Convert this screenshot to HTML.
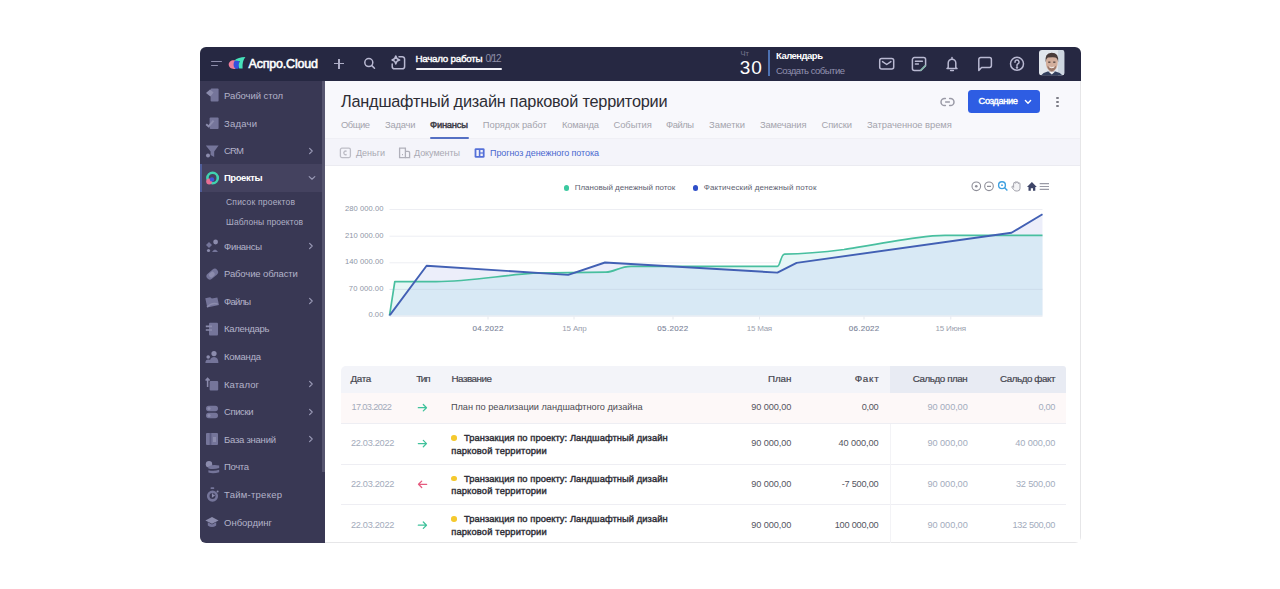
<!DOCTYPE html><html><head><meta charset="utf-8"><style>
*{margin:0;padding:0;box-sizing:border-box}
html,body{width:1280px;height:589px;background:#fff;overflow:hidden;font-family:"Liberation Sans",sans-serif}
.a{position:absolute;white-space:nowrap}
#frame{position:absolute;left:200px;top:47px;width:881px;height:496px;border-radius:6px;overflow:hidden;background:#fff}
#pg{position:absolute;left:-200px;top:-47px;width:1280px;height:589px}
.r{position:absolute}
svg.a{overflow:visible}
</style></head><body>
<div id="frame"><div id="pg">
<div class="r" style="left:200px;top:80px;width:125px;height:463px;background:#393854"></div>
<div class="r" style="left:322px;top:80px;width:3px;height:392px;background:#56556f"></div>
<div class="r" style="left:325px;top:80px;width:755px;height:59px;background:#f8f8fc"></div>
<div class="r" style="left:325px;top:138px;width:755px;height:28px;background:#f4f4fa;border-top:1px solid #efeff5;border-bottom:1px solid #ebebf1"></div>
<div class="r" style="left:1080px;top:80px;width:1px;height:463px;background:#e6e6e8"></div>
<div class="r" style="left:325px;top:542px;width:756px;height:1px;background:#e6e6e8"></div>
<div class="r" style="left:200px;top:47px;width:881px;height:33.5px;background:#262842"></div>
<div class="r" style="left:211px;top:61px;width:10.5px;height:1.4px;background:#8d8daa;border-radius:1px"></div>
<div class="r" style="left:211px;top:64.6px;width:6.5px;height:1.4px;background:#8d8daa;border-radius:1px"></div>
<svg class="a" style="left:226px;top:55px" width="22" height="16" viewBox="0 0 22 16">
<path d="M9.6 5.6 C6 4.4 2.6 6.6 2.7 9.6 C2.8 12.6 5.8 14.6 9.6 13.8 Z" fill="#ee7d9b"/>
<path d="M9.4 5.2 C7.2 6.6 6.8 11.4 9.2 13.6 C10.8 14 12.4 13.6 12.8 13.2 L13.2 6 C12 5.2 10.6 5 9.4 5.2 Z" fill="#3551dd"/>
<path d="M8.4 5.4 C10.6 3.2 14.6 2.2 19.4 2 C17.2 4.6 16.2 8.4 16.6 13.4 L13.2 13.4 C12.6 11.2 12.4 8.4 13.8 6.2 C12 5.6 10.2 5.4 8.4 5.4 Z" fill="#46e3bb"/>
</svg>
<div class="a" style="left:248.50px;top:58.37px;font-size:12.5px;line-height:12.5px;color:#ffffff;letter-spacing:-0.189px;-webkit-text-stroke:0.55px #ffffff;">Аспро.Cloud</div>
<div class="r" style="left:334.2px;top:63.1px;width:9.6px;height:1.3px;background:#adadc6"></div>
<div class="r" style="left:338.35px;top:59px;width:1.3px;height:9.6px;background:#adadc6"></div>
<svg class="a" style="left:362px;top:56px" width="16" height="16" viewBox="0 0 16 16" fill="none" stroke="#b9b9d2" stroke-width="1.5" stroke-linecap="round">
<circle cx="6.8" cy="6.6" r="4"/><path d="M9.8 9.6 L12.5 12.3"/></svg>
<svg class="a" style="left:389px;top:53px" width="18" height="18" viewBox="0 0 18 18" fill="none" stroke="#b9b9d2" stroke-width="1.5" stroke-linecap="round">
<path d="M10 3.7 H13.2 A2.4 2.4 0 0 1 15.6 6.1 V13.4 A2.4 2.4 0 0 1 13.2 15.8 H5.6 A2.4 2.4 0 0 1 3.2 13.4 V11"/>
<path d="M6.8 3 Q7.4 6.4 10.6 7 Q7.4 7.6 6.8 10.9 Q6.2 7.6 3 7 Q6.2 6.4 6.8 3 Z" fill="none" stroke-width="1.5" stroke-linejoin="round"/>
</svg>
<div class="a" style="left:415.50px;top:53.72px;font-size:9.8px;line-height:9.8px;color:#ffffff;letter-spacing:-0.263px;-webkit-text-stroke:0.4px #ffffff;">Начало работы</div>
<div class="a" style="left:485.50px;top:53.70px;font-size:10px;line-height:10px;color:#8e8ea8;letter-spacing:-1.154px;">0/12</div>
<div class="r" style="left:415.5px;top:68px;width:86.5px;height:2.4px;background:#f2f2f8;border-radius:2px"></div>
<div class="a" style="left:740.40px;top:50.42px;font-size:7.5px;line-height:7.5px;color:#75758f;letter-spacing:0.166px;">Чт</div>
<div class="a" style="left:739.80px;top:58.02px;font-size:19px;line-height:19px;color:#ffffff;letter-spacing:0.865px;">30</div>
<div class="r" style="left:768px;top:50px;width:2.2px;height:26px;background:#4d72b3"></div>
<div class="a" style="left:776.00px;top:51.26px;font-size:9.5px;line-height:9.5px;color:#ffffff;font-weight:bold;letter-spacing:-0.511px;">Календарь</div>
<div class="a" style="left:776.00px;top:65.76px;font-size:9.5px;line-height:9.5px;color:#9292b0;letter-spacing:-0.507px;">Создать событие</div>
<svg class="a" style="left:877px;top:55px" width="20" height="18" viewBox="0 0 20 18" fill="none" stroke="#b9b9d2" stroke-width="1.5" stroke-linejoin="round" stroke-linecap="round">
<rect x="2.7" y="3.5" width="14" height="10.5" rx="2"/><path d="M5.5 6.6 L9.7 9.5 L13.9 6.6"/></svg>
<svg class="a" style="left:910px;top:55px" width="18" height="18" viewBox="0 0 18 18" fill="none" stroke="#b9b9d2" stroke-width="1.5" stroke-linejoin="round" stroke-linecap="round">
<path d="M15.6 10.6 V4.6 A2 2 0 0 0 13.6 2.6 H4.4 A2 2 0 0 0 2.4 4.6 V13.6 A2 2 0 0 0 4.4 15.6 H10.6 Z"/><path d="M5.4 6.3 H12.4 M5.4 9 H8.4"/><path d="M10.8 15.2 L15.2 10.8" stroke="#7fb8a8"/></svg>
<svg class="a" style="left:943px;top:55px" width="18" height="18" viewBox="0 0 18 18" fill="none" stroke="#b9b9d2" stroke-width="1.5" stroke-linejoin="round" stroke-linecap="round">
<path d="M5.2 12.6 V8 A3.8 3.8 0 0 1 12.8 8 V12.6 L14 13.6 H4 Z"/><path d="M9 2.4 V3.6 M7.6 15.4 H10.4"/></svg>
<svg class="a" style="left:976px;top:55px" width="18" height="18" viewBox="0 0 18 18" fill="none" stroke="#b9b9d2" stroke-width="1.5" stroke-linejoin="round" stroke-linecap="round">
<path d="M2.8 15.4 V4.4 A1.8 1.8 0 0 1 4.6 2.6 H13.6 A1.8 1.8 0 0 1 15.4 4.4 V10.6 A1.8 1.8 0 0 1 13.6 12.4 H5.6 Z"/></svg>
<svg class="a" style="left:1008px;top:55px" width="18" height="18" viewBox="0 0 18 18" fill="none" stroke="#b9b9d2" stroke-width="1.5" stroke-linecap="round">
<circle cx="9" cy="8.8" r="6.5"/><path d="M7 7.2 A2 2 0 1 1 9.6 9 Q9 9.4 9 10.4" /><circle cx="9" cy="12.4" r="0.5" fill="#b9b9d2"/></svg>
<svg class="a" style="left:1038.5px;top:50.4px" width="25.5" height="25.4" viewBox="0 0 25.5 25.4">
<defs><clipPath id="av"><rect x="0" y="0" width="25.5" height="25.4" rx="3"/></clipPath></defs>
<g clip-path="url(#av)">
<rect width="25.5" height="25.4" fill="#e2e7ed"/>
<rect x="19" y="0" width="6.5" height="25.4" fill="#cdd6e0"/>
<path d="M2 25.4 Q4 22.6 8.6 21.6 L16.6 21.6 Q21.4 22.6 23.6 25.4 Z" fill="#34405e"/>
<path d="M9.4 21.4 L12.8 24.6 L16.2 21.4 Z" fill="#f4f4f4"/>
<path d="M6.8 11 Q6.6 20.6 12.8 21.8 Q19 20.6 18.8 11 Q18.6 6 12.8 6 Q7 6 6.8 11 Z" fill="#d2ae9c"/>
<path d="M6.6 12.4 Q5.4 3.2 12.6 2.8 Q20.2 2.8 19.2 12.2 Q18.4 7.8 16.4 7.4 Q12.4 7.2 8.8 7.6 Q7 8.6 6.6 12.4 Z" fill="#4a3c3a"/>
<path d="M8.4 15.4 Q12.8 21 17.2 15.4 Q17.2 20 12.8 21.4 Q8.4 20 8.4 15.4 Z" fill="#9a786a"/>
<path d="M10.4 17 Q12.8 18.4 15.2 17" stroke="#f6f0ee" stroke-width="1" fill="none"/>
<rect x="9.2" y="11.6" width="2.2" height="1.1" fill="#3b2f2f"/><rect x="14.2" y="11.6" width="2.2" height="1.1" fill="#3b2f2f"/>
</g></svg>
<div class="r" style="left:200px;top:163.5px;width:122px;height:28.3px;background:#44425f"></div>
<div class="r" style="left:200px;top:163.5px;width:1.8px;height:28.3px;background:#4e5c98"></div>
<div class="a" style="left:224.00px;top:90.76px;font-size:9.5px;line-height:9.5px;color:#b3b3c9;letter-spacing:-0.058px;">Рабочий стол</div>
<div class="a" style="left:224.00px;top:118.76px;font-size:9.5px;line-height:9.5px;color:#b3b3c9;letter-spacing:0.221px;">Задачи</div>
<div class="a" style="left:224.00px;top:146.06px;font-size:9.5px;line-height:9.5px;color:#b3b3c9;letter-spacing:-0.818px;">CRM</div>
<div class="a" style="left:224.00px;top:173.06px;font-size:9.5px;line-height:9.5px;color:#ffffff;font-weight:bold;letter-spacing:-0.456px;">Проекты</div>
<div class="a" style="left:224.00px;top:241.76px;font-size:9.5px;line-height:9.5px;color:#b3b3c9;letter-spacing:-0.314px;">Финансы</div>
<div class="a" style="left:224.00px;top:269.26px;font-size:9.5px;line-height:9.5px;color:#b3b3c9;letter-spacing:-0.124px;">Рабочие области</div>
<div class="a" style="left:224.00px;top:296.76px;font-size:9.5px;line-height:9.5px;color:#b3b3c9;letter-spacing:-0.796px;">Файлы</div>
<div class="a" style="left:224.00px;top:324.36px;font-size:9.5px;line-height:9.5px;color:#b3b3c9;letter-spacing:-0.306px;">Календарь</div>
<div class="a" style="left:224.00px;top:351.96px;font-size:9.5px;line-height:9.5px;color:#b3b3c9;letter-spacing:-0.284px;">Команда</div>
<div class="a" style="left:224.00px;top:379.56px;font-size:9.5px;line-height:9.5px;color:#b3b3c9;letter-spacing:0.077px;">Каталог</div>
<div class="a" style="left:224.00px;top:407.16px;font-size:9.5px;line-height:9.5px;color:#b3b3c9;letter-spacing:-0.405px;">Списки</div>
<div class="a" style="left:224.00px;top:434.76px;font-size:9.5px;line-height:9.5px;color:#b3b3c9;letter-spacing:-0.244px;">База знаний</div>
<div class="a" style="left:224.00px;top:462.36px;font-size:9.5px;line-height:9.5px;color:#b3b3c9;letter-spacing:-0.345px;">Почта</div>
<div class="a" style="left:224.00px;top:489.96px;font-size:9.5px;line-height:9.5px;color:#b3b3c9;letter-spacing:0.259px;">Тайм-трекер</div>
<div class="a" style="left:224.00px;top:517.56px;font-size:9.5px;line-height:9.5px;color:#b3b3c9;letter-spacing:0.002px;">Онбординг</div>
<div class="a" style="left:226.00px;top:198.29px;font-size:8.5px;line-height:8.5px;color:#b0b0c6;letter-spacing:0.194px;">Список проектов</div>
<div class="a" style="left:226.00px;top:217.89px;font-size:8.5px;line-height:8.5px;color:#b0b0c6;letter-spacing:0.094px;">Шаблоны проектов</div>
<svg class="a" style="left:307px;top:146.5px" width="8" height="8" viewBox="0 0 8 8" fill="none" stroke="#9898b4" stroke-width="1.2" stroke-linecap="round" stroke-linejoin="round"><path d="M2.6 1.4 L5.2 4 L2.6 6.6"/></svg>
<svg class="a" style="left:307px;top:242.2px" width="8" height="8" viewBox="0 0 8 8" fill="none" stroke="#9898b4" stroke-width="1.2" stroke-linecap="round" stroke-linejoin="round"><path d="M2.6 1.4 L5.2 4 L2.6 6.6"/></svg>
<svg class="a" style="left:307px;top:297.2px" width="8" height="8" viewBox="0 0 8 8" fill="none" stroke="#9898b4" stroke-width="1.2" stroke-linecap="round" stroke-linejoin="round"><path d="M2.6 1.4 L5.2 4 L2.6 6.6"/></svg>
<svg class="a" style="left:307px;top:380.0px" width="8" height="8" viewBox="0 0 8 8" fill="none" stroke="#9898b4" stroke-width="1.2" stroke-linecap="round" stroke-linejoin="round"><path d="M2.6 1.4 L5.2 4 L2.6 6.6"/></svg>
<svg class="a" style="left:307px;top:407.6px" width="8" height="8" viewBox="0 0 8 8" fill="none" stroke="#9898b4" stroke-width="1.2" stroke-linecap="round" stroke-linejoin="round"><path d="M2.6 1.4 L5.2 4 L2.6 6.6"/></svg>
<svg class="a" style="left:307px;top:435.2px" width="8" height="8" viewBox="0 0 8 8" fill="none" stroke="#9898b4" stroke-width="1.2" stroke-linecap="round" stroke-linejoin="round"><path d="M2.6 1.4 L5.2 4 L2.6 6.6"/></svg>
<svg class="a" style="left:307.5px;top:173.8px" width="8" height="8" viewBox="0 0 8 8" fill="none" stroke="#9898b4" stroke-width="1.2" stroke-linecap="round" stroke-linejoin="round"><path d="M1.2 2.6 L4 5.2 L6.8 2.6"/></svg>
<svg class="a" style="left:204px;top:87.3px" width="16" height="16" viewBox="0 0 16 16"><rect x="6.6" y="1.6" width="8" height="13" rx="1" fill="#75759a"/><path d="M2 6 L6 2.4 L9.6 5.6 L6.4 9.6 Z" fill="#8c8cad"/></svg>
<svg class="a" style="left:204px;top:115.3px" width="16" height="16" viewBox="0 0 16 16"><rect x="5.6" y="2.4" width="9" height="11.6" rx="1" fill="#75759a"/><path d="M2.2 9.2 L4.6 11.4 L9.6 5.6" stroke="#8c8cad" stroke-width="2" fill="none"/></svg>
<svg class="a" style="left:204px;top:142.6px" width="16" height="16" viewBox="0 0 16 16"><path d="M1.8 2.6 H14.6 L10.2 8.6 V14 L6.6 12 V8.6 Z" fill="#75759a"/><circle cx="4" cy="12.4" r="2" fill="#8c8cad"/></svg>
<svg class="a" style="left:204px;top:169.6px" width="16" height="16" viewBox="0 0 16 16"><circle cx="8.6" cy="8" r="5.2" fill="none" stroke="#3fd3b0" stroke-width="2.6"/><circle cx="5.2" cy="11.6" r="3" fill="#e76f95"/><circle cx="8" cy="9.4" r="2.2" fill="#3e57d9"/></svg>
<svg class="a" style="left:204px;top:238.3px" width="16" height="16" viewBox="0 0 16 16"><circle cx="11.6" cy="4" r="2.4" fill="#8c8cad"/><path d="M2 7 L5 4 L8 7 L5 10 Z" fill="#75759a"/><path d="M8 14 Q11 9 14 14 Z" fill="#75759a"/><circle cx="4.5" cy="12.5" r="1.6" fill="#8c8cad"/></svg>
<svg class="a" style="left:204px;top:265.8px" width="16" height="16" viewBox="0 0 16 16"><rect x="1.6" y="5" width="13" height="6.6" rx="3.3" transform="rotate(-40 8 8)" fill="#75759a"/><rect x="4.5" y="6" width="6" height="4.6" rx="2" transform="rotate(-40 8 8)" fill="#8c8cad"/></svg>
<svg class="a" style="left:204px;top:293.3px" width="16" height="16" viewBox="0 0 16 16"><path d="M2 4 H7 L8.4 5.6 H14 V13.4 H2 Z" fill="#75759a" transform="rotate(-12 8 8)"/><path d="M3 14 Q8 9 13.6 11" stroke="#8c8cad" stroke-width="1.5" fill="none"/></svg>
<svg class="a" style="left:204px;top:320.9px" width="16" height="16" viewBox="0 0 16 16"><rect x="5" y="1.8" width="9" height="12.6" rx="1" fill="#75759a"/><path d="M1.8 5.4 H8 M1.8 9 H8" stroke="#8c8cad" stroke-width="1.6"/></svg>
<svg class="a" style="left:204px;top:348.5px" width="16" height="16" viewBox="0 0 16 16"><circle cx="10" cy="4.6" r="2.6" fill="#8c8cad"/><path d="M5.6 14 Q5.6 8 10 8 Q14.4 8 14.4 14 Z" fill="#75759a"/><circle cx="4.2" cy="8" r="1.8" fill="#8c8cad"/><path d="M1.4 14 Q1.4 10.6 4.4 10.6 Q6 10.6 6.6 12 V14 Z" fill="#75759a"/></svg>
<svg class="a" style="left:204px;top:376.1px" width="16" height="16" viewBox="0 0 16 16"><rect x="5.6" y="5" width="8.6" height="9.4" rx="1" fill="#75759a"/><path d="M3.6 11 V2.6 M1.6 4.6 L3.6 2.4 L5.6 4.6" stroke="#8c8cad" stroke-width="1.5" fill="none"/></svg>
<svg class="a" style="left:204px;top:403.7px" width="16" height="16" viewBox="0 0 16 16"><rect x="2" y="1.8" width="12" height="5.4" rx="2.7" fill="#75759a"/><rect x="2" y="8.8" width="12" height="5.4" rx="2.7" fill="#75759a"/><circle cx="5" cy="4.5" r="1.6" fill="#8c8cad"/><circle cx="5" cy="11.5" r="1.6" fill="#8c8cad"/></svg>
<svg class="a" style="left:204px;top:431.3px" width="16" height="16" viewBox="0 0 16 16"><rect x="2" y="2" width="12" height="12" rx="1" fill="#75759a"/><rect x="5.6" y="2" width="1.8" height="12" fill="#5a5a80"/><rect x="9" y="6" width="3" height="5" fill="#8c8cad"/></svg>
<svg class="a" style="left:204px;top:458.9px" width="16" height="16" viewBox="0 0 16 16"><circle cx="5" cy="5.2" r="3.2" fill="#8c8cad"/><path d="M4.4 7.4 Q9 5.2 15.2 6.6 V9 Q9.6 10.8 4.4 9.4 Z" fill="#75759a"/><path d="M4.4 11.2 Q9.6 12.6 15.2 10.8 V13.2 Q9.6 15 4.4 13.6 Z" fill="#75759a"/></svg>
<svg class="a" style="left:204px;top:486.5px" width="16" height="16" viewBox="0 0 16 16"><circle cx="8.5" cy="9.1" r="4.3" fill="none" stroke="#75759a" stroke-width="2.6"/><path d="M8.6 6.6 V9.4 L10.6 8" stroke="#8c8cad" stroke-width="1.4" fill="none"/><rect x="6.6" y="0.2" width="3.6" height="1.8" rx="0.6" fill="#75759a"/><circle cx="13.6" cy="4.6" r="1" fill="#8c8cad"/></svg>
<svg class="a" style="left:204px;top:514.1px" width="16" height="16" viewBox="0 0 16 16"><path d="M1.4 6.4 L8 3 L14.6 6.4 L8 9.8 Z" fill="#8c8cad"/><path d="M3.8 8.2 V11.6 Q8 14.6 12.2 11.6 V8.2 L8 10.4 Z" fill="#75759a"/></svg>
<div class="a" style="left:341.00px;top:93.17px;font-size:16.3px;line-height:16.3px;color:#2d2d35;letter-spacing:-0.211px;">Ландшафтный дизайн парковой территории</div>
<div class="a" style="left:341.00px;top:119.97px;font-size:9.4px;line-height:9.4px;color:#a4a4ad;letter-spacing:-0.477px;">Общие</div>
<div class="a" style="left:385.00px;top:119.97px;font-size:9.4px;line-height:9.4px;color:#a4a4ad;letter-spacing:-0.192px;">Задачи</div>
<div class="a" style="left:430.00px;top:119.97px;font-size:9.4px;line-height:9.4px;color:#3c3c46;letter-spacing:-0.244px;-webkit-text-stroke:0.45px #3c3c46;">Финансы</div>
<div class="a" style="left:482.80px;top:119.97px;font-size:9.4px;line-height:9.4px;color:#a4a4ad;letter-spacing:-0.050px;">Порядок работ</div>
<div class="a" style="left:562.00px;top:119.97px;font-size:9.4px;line-height:9.4px;color:#a4a4ad;letter-spacing:-0.216px;">Команда</div>
<div class="a" style="left:613.40px;top:119.97px;font-size:9.4px;line-height:9.4px;color:#a4a4ad;letter-spacing:-0.034px;">События</div>
<div class="a" style="left:666.00px;top:119.97px;font-size:9.4px;line-height:9.4px;color:#a4a4ad;letter-spacing:-0.467px;">Файлы</div>
<div class="a" style="left:709.00px;top:119.97px;font-size:9.4px;line-height:9.4px;color:#a4a4ad;letter-spacing:0.008px;">Заметки</div>
<div class="a" style="left:760.00px;top:119.97px;font-size:9.4px;line-height:9.4px;color:#a4a4ad;letter-spacing:-0.168px;">Замечания</div>
<div class="a" style="left:821.50px;top:119.97px;font-size:9.4px;line-height:9.4px;color:#a4a4ad;letter-spacing:-0.139px;">Списки</div>
<div class="a" style="left:867.00px;top:119.97px;font-size:9.4px;line-height:9.4px;color:#a4a4ad;letter-spacing:-0.052px;">Затраченное время</div>
<div class="r" style="left:429.5px;top:137px;width:39px;height:2px;background:#5570c4;border-radius:1px"></div>
<svg class="a" style="left:938px;top:94px" width="19" height="16" viewBox="0 0 19 16" fill="none" stroke="#9a9aa6" stroke-width="1.5" stroke-linecap="round">
<path d="M7.4 4.4 H6.6 A3.6 3.6 0 0 0 6.6 11.6 H7.4"/><path d="M11.6 4.4 H12.4 A3.6 3.6 0 0 1 12.4 11.6 H11.6"/><path d="M7.6 8 H11.4"/></svg>
<div class="r" style="left:968px;top:90px;width:72px;height:22.6px;background:#2e5de3;border-radius:3.5px"></div>
<div class="a" style="left:978.60px;top:97.19px;font-size:9.3px;line-height:9.3px;color:#ffffff;letter-spacing:-0.364px;-webkit-text-stroke:0.4px #ffffff;">Создание</div>
<svg class="a" style="left:1023px;top:97.8px" width="10" height="8" viewBox="0 0 10 8" fill="none" stroke="#ffffff" stroke-width="1.4" stroke-linecap="round" stroke-linejoin="round"><path d="M2.4 2.6 L5 5.2 L7.6 2.6"/></svg>
<div class="r" style="left:1056.3px;top:96.8px;width:2.4px;height:2.4px;border-radius:50%;background:#7c7c86"></div>
<div class="r" style="left:1056.3px;top:100.8px;width:2.4px;height:2.4px;border-radius:50%;background:#7c7c86"></div>
<div class="r" style="left:1056.3px;top:104.8px;width:2.4px;height:2.4px;border-radius:50%;background:#7c7c86"></div>
<svg class="a" style="left:338px;top:146px" width="14" height="14" viewBox="0 0 14 14" fill="none" stroke="#bdbdc6" stroke-width="1.3">
<rect x="2.4" y="2.2" width="10" height="9.4" rx="1.5"/><path d="M8.6 5.4 A1.8 1.8 0 1 0 8.6 8.4"/></svg>
<div class="a" style="left:356.00px;top:149.13px;font-size:9px;line-height:9px;color:#a9a9b3;letter-spacing:-0.014px;">Деньги</div>
<svg class="a" style="left:397px;top:146px" width="15" height="14" viewBox="0 0 15 14" fill="none" stroke="#b0b0ba" stroke-width="1.3">
<path d="M2.6 2.2 H8.4 V11.6 H2.6 Z"/><path d="M8.4 5.4 H11.2 A1.4 1.4 0 0 1 12.6 6.8 V11.6 H8.4"/><path d="M5 8.6 H6"/></svg>
<div class="a" style="left:414.00px;top:149.13px;font-size:9px;line-height:9px;color:#a9a9b3;letter-spacing:-0.049px;">Документы</div>
<svg class="a" style="left:473px;top:146px" width="14" height="14" viewBox="0 0 14 14">
<rect x="1.6" y="2.2" width="10" height="9.6" rx="1.4" fill="#5570d8"/><rect x="3.4" y="4" width="2.4" height="6" fill="#f4f4fa"/><rect x="7.4" y="4" width="2.4" height="2.4" fill="#f4f4fa"/><rect x="7.4" y="7.6" width="2.4" height="2.4" fill="#f4f4fa"/></svg>
<div class="a" style="left:490.00px;top:149.13px;font-size:9px;line-height:9px;color:#4a68cf;letter-spacing:-0.080px;">Прогноз денежного потока</div>
<div class="r" style="left:563.7px;top:185px;width:5.6px;height:5.6px;border-radius:50%;background:#3cc9a0"></div>
<div class="r" style="left:692.7px;top:185px;width:5.6px;height:5.6px;border-radius:50%;background:#2f4fc8"></div>
<div class="a" style="left:574.70px;top:183.76px;font-size:8px;line-height:8px;color:#5d6170;letter-spacing:-0.003px;">Плановый денежный поток</div>
<div class="a" style="left:703.80px;top:183.76px;font-size:8px;line-height:8px;color:#5d6170;letter-spacing:0.113px;">Фактический денежный поток</div>
<div class="a" style="left:345.00px;top:205.21px;font-size:7.6px;line-height:7.6px;color:#8e95a6;letter-spacing:0.040px;">280 000.00</div>
<div class="a" style="left:345.00px;top:231.81px;font-size:7.6px;line-height:7.6px;color:#8e95a6;letter-spacing:0.040px;">210 000.00</div>
<div class="a" style="left:345.00px;top:258.41px;font-size:7.6px;line-height:7.6px;color:#8e95a6;letter-spacing:0.040px;">140 000.00</div>
<div class="a" style="left:348.84px;top:284.81px;font-size:7.6px;line-height:7.6px;color:#8e95a6;letter-spacing:0.094px;">70 000.00</div>
<div class="a" style="left:368.40px;top:311.21px;font-size:7.6px;line-height:7.6px;color:#8e95a6;letter-spacing:0.069px;">0.00</div>
<div class="a" style="left:472.50px;top:324.76px;font-size:8px;line-height:8px;color:#7b8499;letter-spacing:0.347px;-webkit-text-stroke:0.12px #7b8499;">04.2022</div>
<div class="a" style="left:562.30px;top:324.76px;font-size:8px;line-height:8px;color:#9aa0ad;letter-spacing:-0.168px;">15 Апр</div>
<div class="a" style="left:657.30px;top:324.76px;font-size:8px;line-height:8px;color:#7b8499;letter-spacing:0.347px;-webkit-text-stroke:0.12px #7b8499;">05.2022</div>
<div class="a" style="left:746.85px;top:324.76px;font-size:8px;line-height:8px;color:#9aa0ad;letter-spacing:-0.271px;">15 Мая</div>
<div class="a" style="left:848.75px;top:324.76px;font-size:8px;line-height:8px;color:#7b8499;letter-spacing:0.264px;-webkit-text-stroke:0.12px #7b8499;">06.2022</div>
<div class="a" style="left:935.55px;top:324.76px;font-size:8px;line-height:8px;color:#9aa0ad;letter-spacing:-0.187px;">15 Июня</div>
<svg class="a" style="left:0;top:0" width="1280" height="589" viewBox="0 0 1280 589">
<g stroke="#edeef3" stroke-width="1">
<line x1="389.5" y1="209.5" x2="1042.5" y2="209.5"/><line x1="389.5" y1="236.2" x2="1042.5" y2="236.2"/><line x1="389.5" y1="262.8" x2="1042.5" y2="262.8"/>
</g>
<defs><clipPath id="cg"><path d="M389.5,315.6 L394.8,281.6 L436,281.6 C470,281.4 500,275.5 533,273.2 L606,272.2 C614,272 620,266.4 631,266.3 L777.4,266.3 C780.5,266.3 780.5,254.3 784.5,254.2 C800,254 820,252.6 844,249.5 C865,246 890,241.6 918,237.6 C930,236 935,235.5 945,235.4 L1042.5,235.4 L1042.5,315.6 Z"/></clipPath></defs>
<path d="M389.5,315.6 L394.8,281.6 L436,281.6 C470,281.4 500,275.5 533,273.2 L606,272.2 C614,272 620,266.4 631,266.3 L777.4,266.3 C780.5,266.3 780.5,254.3 784.5,254.2 C800,254 820,252.6 844,249.5 C865,246 890,241.6 918,237.6 C930,236 935,235.5 945,235.4 L1042.5,235.4 L1042.5,315.6 Z" fill="#e6f6f6"/>
<path d="M389.5,315.6 L426.6,265.7 L568.2,274.9 L605,262.5 L777.4,272.6 L796.6,262.9 L1011.5,232.7 L1042.5,214.3 L1042.5,315.6 Z" fill="#eceefa"/>
<path d="M389.5,315.6 L426.6,265.7 L568.2,274.9 L605,262.5 L777.4,272.6 L796.6,262.9 L1011.5,232.7 L1042.5,214.3 L1042.5,315.6 Z" fill="#d8e9f5" clip-path="url(#cg)"/>
<g stroke="#c8d6e6" stroke-width="1" opacity="0.6">
<line x1="389.5" y1="289.4" x2="1042.5" y2="289.4"/>
</g>
<path d="M389.5,315.6 L394.8,281.6 L436,281.6 C470,281.4 500,275.5 533,273.2 L606,272.2 C614,272 620,266.4 631,266.3 L777.4,266.3 C780.5,266.3 780.5,254.3 784.5,254.2 C800,254 820,252.6 844,249.5 C865,246 890,241.6 918,237.6 C930,236 935,235.5 945,235.4 L1042.5,235.4" fill="none" stroke="#48bf9f" stroke-width="1.7" stroke-linejoin="round"/>
<path d="M389.5,315.6 L426.6,265.7 L568.2,274.9 L605,262.5 L777.4,272.6 L796.6,262.9 L1011.5,232.7 L1042.5,214.3" fill="none" stroke="#4260b4" stroke-width="1.9" stroke-linejoin="round"/>
<line x1="389.5" y1="316.1" x2="1042.5" y2="316.1" stroke="#dfe5ee" stroke-width="1"/>
<g stroke="#e6e9ef" stroke-width="1"><line x1="488" y1="316.5" x2="488" y2="319.5"/><line x1="574" y1="316.5" x2="574" y2="319.5"/><line x1="673" y1="316.5" x2="673" y2="319.5"/><line x1="759.5" y1="316.5" x2="759.5" y2="319.5"/><line x1="864" y1="316.5" x2="864" y2="319.5"/><line x1="950.8" y1="316.5" x2="950.8" y2="319.5"/></g>
</svg>
<svg class="a" style="left:966px;top:176px" width="90" height="20" viewBox="966 176 90 20">
<g fill="none" stroke="#8e8e98" stroke-width="1.1">
<circle cx="976.3" cy="186.3" r="4.3"/><circle cx="989" cy="186.3" r="4.3"/>
</g>
<circle cx="976.3" cy="186.3" r="1.3" fill="#8e8e98"/>
<line x1="987" y1="186.3" x2="991" y2="186.3" stroke="#8e8e98" stroke-width="1.2"/>
<g fill="none" stroke="#3fa0e0" stroke-width="1.4"><circle cx="1002" cy="185.2" r="3.4"/><line x1="1004.6" y1="187.8" x2="1007.4" y2="190.6"/></g>
<circle cx="1002" cy="185.2" r="0.9" fill="#3fa0e0"/>
<path d="M1013.6 187.4 V183.4 Q1013.6 182.5 1014.4 182.5 Q1015.2 182.5 1015.2 183.4 V182.6 Q1015.2 181.6 1016 181.6 Q1016.8 181.6 1016.8 182.6 V182.8 Q1016.8 182 1017.6 182 Q1018.4 182 1018.4 182.8 V183.6 Q1018.4 182.9 1019.2 182.9 Q1020 182.9 1020 183.8 V188.4 Q1020 191 1017.4 191 H1016 Q1014.6 191 1013.6 189.6 L1011.9 187.2 Q1011.6 186.4 1012.4 186.2 Q1013 186.1 1013.6 187.4 Z" fill="#f4f4f6" stroke="#9a9aa4" stroke-width="0.9"/>
<path d="M1027 186.9 L1031.9 182.1 L1036.8 186.9 H1035.3 V190.8 H1033 V188.2 H1030.8 V190.8 H1028.5 V186.9 Z" fill="#3e4568"/>
<g stroke="#9a9ba6" stroke-width="1.2"><line x1="1039.7" y1="183.6" x2="1049" y2="183.6"/><line x1="1039.7" y1="186.5" x2="1049" y2="186.5"/><line x1="1039.7" y1="189.4" x2="1049" y2="189.4"/></g>
</svg>
<div class="r" style="left:340.5px;top:365.6px;width:549.5px;height:27.2px;background:#f3f4f9;border-radius:5px 0 0 0"></div>
<div class="r" style="left:890px;top:365.6px;width:176px;height:27.2px;background:#e8ebf3;border-radius:0 3px 0 0"></div>
<div class="r" style="left:340.5px;top:392.8px;width:725.5px;height:30.4px;background:#fdf8f8"></div>
<div class="r" style="left:340.5px;top:423.2px;width:725.5px;height:1px;background:#eeeef3"></div>
<div class="r" style="left:340.5px;top:463.7px;width:725.5px;height:1px;background:#eeeef3"></div>
<div class="r" style="left:340.5px;top:504px;width:725.5px;height:1px;background:#eeeef3"></div>
<div class="r" style="left:889.5px;top:423.5px;width:1px;height:119px;background:#f3f3f6"></div>
<div class="a" style="left:350.60px;top:374.32px;font-size:9.8px;line-height:9.8px;color:#45454f;letter-spacing:-0.367px;-webkit-text-stroke:0.2px #45454f;">Дата</div>
<div class="a" style="left:416.25px;top:374.32px;font-size:9.8px;line-height:9.8px;color:#45454f;letter-spacing:-0.968px;-webkit-text-stroke:0.2px #45454f;">Тип</div>
<div class="a" style="left:451.40px;top:374.32px;font-size:9.8px;line-height:9.8px;color:#45454f;letter-spacing:-0.456px;-webkit-text-stroke:0.2px #45454f;">Название</div>
<div class="a" style="left:768.00px;top:374.32px;font-size:9.8px;line-height:9.8px;color:#45454f;letter-spacing:-0.075px;-webkit-text-stroke:0.2px #45454f;">План</div>
<div class="a" style="left:854.70px;top:374.32px;font-size:9.8px;line-height:9.8px;color:#45454f;letter-spacing:0.738px;-webkit-text-stroke:0.2px #45454f;">Факт</div>
<div class="a" style="left:912.80px;top:374.32px;font-size:9.8px;line-height:9.8px;color:#45454f;letter-spacing:-0.424px;-webkit-text-stroke:0.2px #45454f;">Сальдо план</div>
<div class="a" style="left:1000.00px;top:374.32px;font-size:9.8px;line-height:9.8px;color:#45454f;letter-spacing:-0.435px;-webkit-text-stroke:0.2px #45454f;">Сальдо факт</div>
<div class="a" style="left:351.40px;top:403.30px;font-size:9.2px;line-height:9.2px;color:#a3abbb;letter-spacing:-0.605px;">17.03.2022</div>
<svg class="a" style="left:0;top:0" width="1280" height="589"><path d="M418.3,407.7 H426.5 M423.3,404.5 L426.5,407.7 L423.3,410.9" fill="none" stroke="#3fc29b" stroke-width="1.25" stroke-linecap="round" stroke-linejoin="round"/></svg>
<div class="a" style="left:450.90px;top:403.40px;font-size:9.2px;line-height:9.2px;color:#4a4a52;letter-spacing:0.003px;">План по реализации ландшафтного дизайна</div>
<div class="a" style="left:751.20px;top:403.40px;font-size:9.2px;line-height:9.2px;color:#55555f;letter-spacing:-0.091px;">90 000,00</div>
<div class="a" style="left:861.70px;top:403.40px;font-size:9.2px;line-height:9.2px;color:#55555f;letter-spacing:-0.302px;">0,00</div>
<div class="a" style="left:927.60px;top:403.40px;font-size:9.2px;line-height:9.2px;color:#a3acbd;letter-spacing:-0.091px;">90 000,00</div>
<div class="a" style="left:1038.40px;top:403.40px;font-size:9.2px;line-height:9.2px;color:#a3acbd;letter-spacing:-0.302px;">0,00</div>
<div class="a" style="left:350.90px;top:439.00px;font-size:9.2px;line-height:9.2px;color:#a3abbb;letter-spacing:-0.283px;">22.03.2022</div>
<svg class="a" style="left:0;top:0" width="1280" height="589"><path d="M418.3,443.6 H426.5 M423.3,440.40000000000003 L426.5,443.6 L423.3,446.8" fill="none" stroke="#3fc29b" stroke-width="1.25" stroke-linecap="round" stroke-linejoin="round"/></svg>
<div class="r" style="left:451.2px;top:435.1px;width:5.6px;height:5.6px;border-radius:50%;background:#f5c92e"></div>
<div class="a" style="left:464.00px;top:433.07px;font-size:9.4px;line-height:9.4px;color:#2e2e36;letter-spacing:0.047px;-webkit-text-stroke:0.4px #2e2e36;">Транзакция по проекту: Ландшафтный дизайн</div>
<div class="a" style="left:451.20px;top:445.67px;font-size:9.4px;line-height:9.4px;color:#2e2e36;letter-spacing:0.141px;-webkit-text-stroke:0.4px #2e2e36;">парковой территории</div>
<div class="a" style="left:751.20px;top:439.00px;font-size:9.2px;line-height:9.2px;color:#55555f;letter-spacing:-0.091px;">90 000,00</div>
<div class="a" style="left:838.50px;top:439.00px;font-size:9.2px;line-height:9.2px;color:#55555f;letter-spacing:-0.091px;">40 000,00</div>
<div class="a" style="left:927.60px;top:439.00px;font-size:9.2px;line-height:9.2px;color:#a3acbd;letter-spacing:-0.091px;">90 000,00</div>
<div class="a" style="left:1015.20px;top:439.00px;font-size:9.2px;line-height:9.2px;color:#a3acbd;letter-spacing:-0.091px;">40 000,00</div>
<div class="a" style="left:350.90px;top:479.70px;font-size:9.2px;line-height:9.2px;color:#a3abbb;letter-spacing:-0.283px;">22.03.2022</div>
<svg class="a" style="left:0;top:0" width="1280" height="589"><path d="M426.7,484.3 H418.5 M421.7,481.1 L418.5,484.3 L421.7,487.5" fill="none" stroke="#e55a7e" stroke-width="1.25" stroke-linecap="round" stroke-linejoin="round"/></svg>
<div class="r" style="left:451.2px;top:475.7px;width:5.6px;height:5.6px;border-radius:50%;background:#f5c92e"></div>
<div class="a" style="left:464.00px;top:473.67px;font-size:9.4px;line-height:9.4px;color:#2e2e36;letter-spacing:0.047px;-webkit-text-stroke:0.4px #2e2e36;">Транзакция по проекту: Ландшафтный дизайн</div>
<div class="a" style="left:451.20px;top:486.27px;font-size:9.4px;line-height:9.4px;color:#2e2e36;letter-spacing:0.141px;-webkit-text-stroke:0.4px #2e2e36;">парковой территории</div>
<div class="a" style="left:751.20px;top:479.70px;font-size:9.2px;line-height:9.2px;color:#55555f;letter-spacing:-0.091px;">90 000,00</div>
<div class="a" style="left:841.70px;top:479.70px;font-size:9.2px;line-height:9.2px;color:#55555f;letter-spacing:-0.235px;">-7 500,00</div>
<div class="a" style="left:927.60px;top:479.70px;font-size:9.2px;line-height:9.2px;color:#a3acbd;letter-spacing:-0.091px;">90 000,00</div>
<div class="a" style="left:1015.90px;top:479.70px;font-size:9.2px;line-height:9.2px;color:#a3acbd;letter-spacing:-0.179px;">32 500,00</div>
<div class="a" style="left:350.90px;top:520.60px;font-size:9.2px;line-height:9.2px;color:#a3abbb;letter-spacing:-0.283px;">22.03.2022</div>
<svg class="a" style="left:0;top:0" width="1280" height="589"><path d="M418.3,525.2 H426.5 M423.3,522.0 L426.5,525.2 L423.3,528.4000000000001" fill="none" stroke="#3fc29b" stroke-width="1.25" stroke-linecap="round" stroke-linejoin="round"/></svg>
<div class="r" style="left:451.2px;top:516.4px;width:5.6px;height:5.6px;border-radius:50%;background:#f5c92e"></div>
<div class="a" style="left:464.00px;top:514.37px;font-size:9.4px;line-height:9.4px;color:#2e2e36;letter-spacing:0.047px;-webkit-text-stroke:0.4px #2e2e36;">Транзакция по проекту: Ландшафтный дизайн</div>
<div class="a" style="left:451.20px;top:526.97px;font-size:9.4px;line-height:9.4px;color:#2e2e36;letter-spacing:0.141px;-webkit-text-stroke:0.4px #2e2e36;">парковой территории</div>
<div class="a" style="left:751.20px;top:520.60px;font-size:9.2px;line-height:9.2px;color:#55555f;letter-spacing:-0.091px;">90 000,00</div>
<div class="a" style="left:834.70px;top:520.60px;font-size:9.2px;line-height:9.2px;color:#55555f;letter-spacing:-0.227px;">100 000,00</div>
<div class="a" style="left:927.60px;top:520.60px;font-size:9.2px;line-height:9.2px;color:#a3acbd;letter-spacing:-0.091px;">90 000,00</div>
<div class="a" style="left:1012.40px;top:520.60px;font-size:9.2px;line-height:9.2px;color:#a3acbd;letter-spacing:-0.338px;">132 500,00</div>
</div></div></body></html>
